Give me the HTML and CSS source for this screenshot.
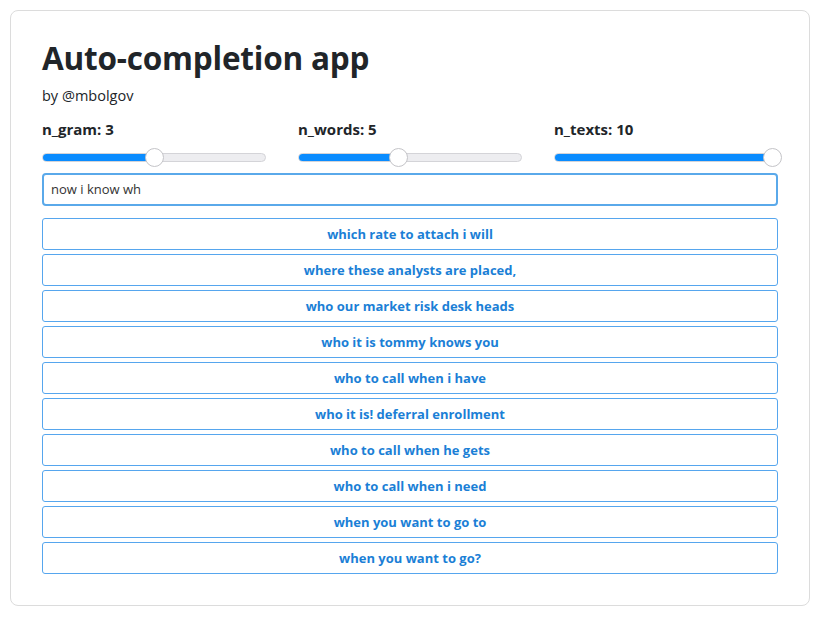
FILE: index.html
```html
<!DOCTYPE html>
<html>
<head>
<meta charset="utf-8">
<link rel="stylesheet" href="styles.css">
</head>
<body>
<div class="card">
  <h1 class="title">Auto-completion app</h1>
  <p class="byline">by @mbolgov</p>
  <div class="controls">
    <div class="control">
      <div class="label">n_gram: 3</div>
      <div class="slider"><div class="track"><div class="fill" style="width:112px"></div></div><div class="thumb" style="left:112px"></div></div>
    </div>
    <div class="control">
      <div class="label">n_words: 5</div>
      <div class="slider"><div class="track"><div class="fill" style="width:100px"></div></div><div class="thumb" style="left:100px"></div></div>
    </div>
    <div class="control">
      <div class="label">n_texts: 10</div>
      <div class="slider"><div class="track full"><div class="fill" style="width:100%"></div></div><div class="thumb" style="left:218px"></div></div>
    </div>
  </div>
  <div class="input">now i know wh</div>
  <div class="list">
    <div class="option">which rate to attach i will</div>
    <div class="option">where these analysts are placed,</div>
    <div class="option">who our market risk desk heads</div>
    <div class="option">who it is tommy knows you</div>
    <div class="option">who to call when i have</div>
    <div class="option">who it is! deferral enrollment</div>
    <div class="option">who to call when he gets</div>
    <div class="option">who to call when i need</div>
    <div class="option">when you want to go to</div>
    <div class="option">when you want to go?</div>
  </div>
</div>
</body>
</html>
```
FILE: styles.css
```css
* { box-sizing: border-box; }
html, body { margin: 0; padding: 0; background: #fff; }
body {
  font-family: "Open Sans", "Noto Sans", "DejaVu Sans", sans-serif;
  color: #212529;
  padding: 10px;
}
.card {
  width: 800px;
  height: 596px;
  border: 1px solid #dcdcdc;
  border-radius: 8px;
  padding: 23px 31px 0 31px;
}
.title {
  margin: 0;
  font-size: 31.5px;
  font-weight: 700;
  line-height: 48px;
  letter-spacing: -0.2px;
  color: #212529;
}
.byline {
  margin: 4px 0 0 0;
  font-size: 14.5px;
  line-height: 20px;
  color: #212529;
}
.controls {
  margin-top: 13px;
  display: grid;
  grid-template-columns: 224px 224px 224px;
  column-gap: 32px;
}
.label {
  font-size: 15px;
  font-weight: 700;
  line-height: 20px;
}
.slider {
  position: relative;
  margin-top: 7px;
  height: 22px;
  display: flex;
  align-items: center;
}
.track {
  width: 224px;
  height: 9px;
  border-radius: 5px;
  background: #ededf0;
  border: 1px solid #d4d4d8;
  overflow: hidden;
  position: relative;
}
.track.full { width: 227px; }
.fill {
  position: absolute;
  left: -1px; top: -1px; bottom: -1px;
  background: #0a8cff;
  border-radius: 5px 0 0 5px;
}
.thumb {
  position: absolute;
  top: 2px;
  width: 19px;
  height: 19px;
  margin-left: -9px;
  border-radius: 50%;
  background: #fff;
  border: 1px solid #c4c4c8;
}
.input {
  margin-top: 5px;
  height: 33px;
  border: 2px solid #5aa9ea;
  border-radius: 4px;
  padding: 0 7px;
  font-size: 13px;
  line-height: 29px;
  color: #333;
}
.list {
  margin-top: 12px;
  display: flex;
  flex-direction: column;
  gap: 4px;
}
.option {
  height: 32px;
  border: 1px solid #56a6ee;
  border-radius: 3px;
  text-align: center;
  font-size: 13px;
  font-weight: 700;
  line-height: 30px;
  color: #1b7fd6;
}
```
